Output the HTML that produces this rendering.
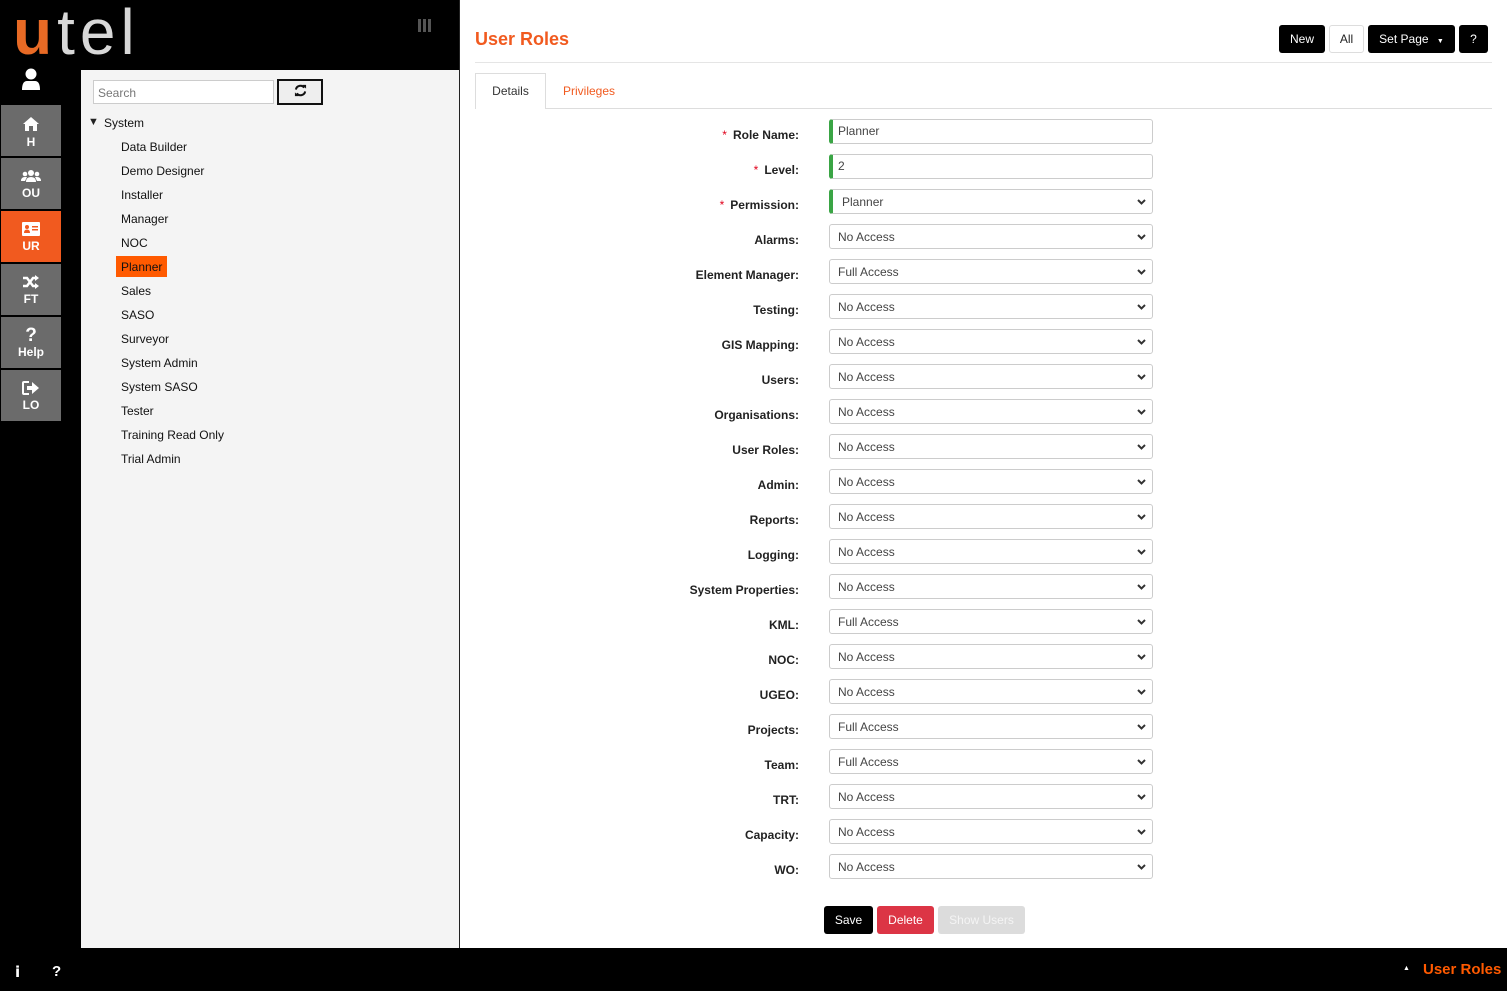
<!DOCTYPE html>
<html><head><meta charset="utf-8"><style>
*{box-sizing:border-box;margin:0;padding:0}
body{width:1507px;height:991px;position:relative;overflow:hidden;background:#fff;font-family:"Liberation Sans",Arial,sans-serif;font-size:12px;color:#222}
.a{position:absolute}
#side{left:0;top:0;width:81px;height:991px;background:#000}
#top{left:0;top:0;width:460px;height:70px;background:#000}
#tree{left:81px;top:70px;width:378px;height:878px;background:#f4f4f4}
#vline{left:459px;top:0;width:1px;height:948px;background:#222}
#foot{left:0;top:948px;width:1507px;height:43px;background:#000}
.nb{position:absolute;left:1px;width:60px;height:51px;background:#6b6b6b;color:#fff;text-align:center;font-size:12px;font-weight:bold}
.nb svg{display:block;margin:11px auto 3px}
.ti{position:absolute;left:121px;font-size:12px;color:#111}
.lbl{position:absolute;right:708px;font-weight:bold;font-size:12px;color:#222;white-space:nowrap}
.lbl i{color:#e0001b;font-style:normal;margin-right:6px;font-weight:normal}
.in{position:absolute;left:829px;width:324px;height:25px;border:1px solid #ccc;border-radius:3px;background:#fff;font-size:12px;color:#444;padding:4px 0 0 8px}
.in.g{border-left:4px solid #3aa545;padding-left:5px}
.in .c{position:absolute;right:6px;top:9px}
.s{padding-top:5px !important}
.btn{position:absolute;height:28px;border-radius:3px;color:#fff;font-size:12px;text-align:center;line-height:28px}
</style></head><body>
<div id="side" class="a"></div>
<div id="top" class="a"></div>
<div id="tree" class="a"></div>
<div id="vline" class="a"></div>

<!-- logo -->
<div class="a" style="left:13px;top:0px;font-size:64px;line-height:64px;font-family:'Liberation Sans',sans-serif;letter-spacing:5px;white-space:nowrap"><span style="color:#e86a25;font-weight:bold">u</span><span style="color:#d8d8d8;font-weight:normal">tel</span></div>
<div class="a" style="left:418px;top:19px;width:3px;height:13px;background:#555;box-shadow:5px 0 #555,10px 0 #555"></div>

<!-- user icon -->
<svg class="a" style="left:21px;top:68px" width="20" height="23" viewBox="0 0 20 23"><circle cx="10" cy="6" r="5.5" fill="#fff"/><path d="M1 22 Q1 13 6 13 L14 13 Q19 13 19 22Z" fill="#fff"/></svg>

<div class="nb" style="top:105px"><svg width="18" height="16" viewBox="0 0 18 16"><path d="M9 1 L1 8 L3 8 L3 15 L7 15 L7 10 L11 10 L11 15 L15 15 L15 8 L17 8Z" fill="#fff"/></svg>H</div>
<div class="nb" style="top:158px"><svg width="20" height="14" viewBox="0 0 20 14"><circle cx="10" cy="4" r="3" fill="#fff"/><circle cx="4" cy="5" r="2.3" fill="#fff"/><circle cx="16" cy="5" r="2.3" fill="#fff"/><path d="M5 13 Q5 8 10 8 Q15 8 15 13Z M0 12 Q0 8 4 8 L6 8 L4 12Z M20 12 Q20 8 16 8 L14 8 L16 12Z" fill="#fff"/></svg>OU</div>
<div class="nb" style="top:211px;background:#f15a1f"><svg width="18" height="14" viewBox="0 0 18 14"><rect x="0" y="0" width="18" height="14" rx="1" fill="#fff"/><circle cx="5" cy="5" r="2" fill="#f15a1f"/><path d="M2 11 Q2 7.5 5 7.5 Q8 7.5 8 11Z" fill="#f15a1f"/><rect x="10" y="4" width="6" height="1.5" fill="#f15a1f"/><rect x="10" y="7" width="6" height="1.5" fill="#f15a1f"/></svg>UR</div>
<div class="nb" style="top:264px"><svg width="18" height="14" viewBox="0 0 18 14"><path d="M1 3 L5 3 L11 11 L14 11" stroke="#fff" stroke-width="2.5" fill="none"/><path d="M1 11 L5 11 L11 3 L14 3" stroke="#fff" stroke-width="2.5" fill="none"/><path d="M13 0 L17 3 L13 6Z M13 8 L17 11 L13 14Z" fill="#fff"/></svg>FT</div>
<div class="nb" style="top:317px;font-weight:bold"><div style="font-size:19px;line-height:19px;padding-top:9px">?</div>Help</div>
<div class="nb" style="top:370px"><svg width="18" height="14" viewBox="0 0 18 14"><path d="M7 1 L2 1 Q1 1 1 2 L1 12 Q1 13 2 13 L7 13" stroke="#fff" stroke-width="2" fill="none"/><path d="M5 5 L10 5 L10 1 L17 7 L10 13 L10 9 L5 9Z" fill="#fff"/></svg>LO</div>

<!-- tree -->
<div class="a" style="left:93px;top:80px;width:181px;height:24px;background:#fff;border:1px solid #ccc;color:#777;padding:5px 0 0 4px">Search</div>
<div class="a" style="left:277px;top:79px;width:46px;height:26px;background:#eee;border:2px solid #111;text-align:center;padding-top:3px"><svg width="13" height="13" viewBox="0 0 14 14"><path d="M2 6 A5 5 0 0 1 11 4 M12 8 A5 5 0 0 1 3 10" stroke="#111" stroke-width="2.2" fill="none"/><path d="M9 1 L13 1 L13 5Z M5 13 L1 13 L1 9Z" fill="#111"/></svg></div>
<div class="a" style="left:88px;top:116px;font-size:11px">▼</div>
<div class="ti" style="left:104px;top:116px">System</div>
<div class="ti" style="top:140px">Data Builder</div>
<div class="ti" style="top:164px">Demo Designer</div>
<div class="ti" style="top:188px">Installer</div>
<div class="ti" style="top:212px">Manager</div>
<div class="ti" style="top:236px">NOC</div>
<div class="a" style="left:116px;top:256px;width:51px;height:21px;background:#ff5a00"></div>
<div class="ti" style="top:260px">Planner</div>
<div class="ti" style="top:284px">Sales</div>
<div class="ti" style="top:308px">SASO</div>
<div class="ti" style="top:332px">Surveyor</div>
<div class="ti" style="top:356px">System Admin</div>
<div class="ti" style="top:380px">System SASO</div>
<div class="ti" style="top:404px">Tester</div>
<div class="ti" style="top:428px">Training Read Only</div>
<div class="ti" style="top:452px">Trial Admin</div>

<!-- header -->
<div class="a" style="left:475px;top:29px;font-size:18px;font-weight:bold;color:#f15a1f">User Roles</div>
<div class="btn" style="left:1279px;top:25px;width:46px;background:#000">New</div>
<div class="btn" style="left:1329px;top:25px;width:35px;background:#fff;color:#222;border:1px solid #ddd;line-height:26px">All</div>
<div class="btn" style="left:1368px;top:25px;width:87px;background:#000">Set Page <span style="font-size:7px;margin-left:5px">▼</span></div>
<div class="btn" style="left:1459px;top:25px;width:29px;background:#000">?</div>
<div class="a" style="left:475px;top:62px;width:1017px;height:1px;background:#e5e5e5"></div>
<div class="a" style="left:475px;top:108px;width:1017px;height:1px;background:#ddd"></div>
<div class="a" style="left:475px;top:73px;width:71px;height:36px;background:#fff;border:1px solid #ddd;border-bottom:none;text-align:center;padding-top:10px;color:#333">Details</div>
<div class="a" style="left:563px;top:84px;color:#f15a1f">Privileges</div>

<!-- form -->
<div class="lbl" style="top:128px"><i>*</i>Role Name:</div><div class="in g" style="top:119px">Planner</div>
<div class="lbl" style="top:163px"><i>*</i>Level:</div><div class="in g" style="top:154px">2</div>
<div class="lbl" style="top:198px"><i>*</i>Permission:</div><div class="in g s" style="top:189px;padding-left:9px">Planner<svg class="c" width="9" height="6" viewBox="0 0 9 6"><path d="M1 1 L4.5 4.5 L8 1" stroke="#333" stroke-width="2" fill="none"/></svg></div>
<div class="lbl" style="top:233px">Alarms:</div><div class="in s" style="top:224px">No Access<svg class="c" width="9" height="6" viewBox="0 0 9 6"><path d="M1 1 L4.5 4.5 L8 1" stroke="#333" stroke-width="2" fill="none"/></svg></div>
<div class="lbl" style="top:268px">Element Manager:</div><div class="in s" style="top:259px">Full Access<svg class="c" width="9" height="6" viewBox="0 0 9 6"><path d="M1 1 L4.5 4.5 L8 1" stroke="#333" stroke-width="2" fill="none"/></svg></div>
<div class="lbl" style="top:303px">Testing:</div><div class="in s" style="top:294px">No Access<svg class="c" width="9" height="6" viewBox="0 0 9 6"><path d="M1 1 L4.5 4.5 L8 1" stroke="#333" stroke-width="2" fill="none"/></svg></div>
<div class="lbl" style="top:338px">GIS Mapping:</div><div class="in s" style="top:329px">No Access<svg class="c" width="9" height="6" viewBox="0 0 9 6"><path d="M1 1 L4.5 4.5 L8 1" stroke="#333" stroke-width="2" fill="none"/></svg></div>
<div class="lbl" style="top:373px">Users:</div><div class="in s" style="top:364px">No Access<svg class="c" width="9" height="6" viewBox="0 0 9 6"><path d="M1 1 L4.5 4.5 L8 1" stroke="#333" stroke-width="2" fill="none"/></svg></div>
<div class="lbl" style="top:408px">Organisations:</div><div class="in s" style="top:399px">No Access<svg class="c" width="9" height="6" viewBox="0 0 9 6"><path d="M1 1 L4.5 4.5 L8 1" stroke="#333" stroke-width="2" fill="none"/></svg></div>
<div class="lbl" style="top:443px">User Roles:</div><div class="in s" style="top:434px">No Access<svg class="c" width="9" height="6" viewBox="0 0 9 6"><path d="M1 1 L4.5 4.5 L8 1" stroke="#333" stroke-width="2" fill="none"/></svg></div>
<div class="lbl" style="top:478px">Admin:</div><div class="in s" style="top:469px">No Access<svg class="c" width="9" height="6" viewBox="0 0 9 6"><path d="M1 1 L4.5 4.5 L8 1" stroke="#333" stroke-width="2" fill="none"/></svg></div>
<div class="lbl" style="top:513px">Reports:</div><div class="in s" style="top:504px">No Access<svg class="c" width="9" height="6" viewBox="0 0 9 6"><path d="M1 1 L4.5 4.5 L8 1" stroke="#333" stroke-width="2" fill="none"/></svg></div>
<div class="lbl" style="top:548px">Logging:</div><div class="in s" style="top:539px">No Access<svg class="c" width="9" height="6" viewBox="0 0 9 6"><path d="M1 1 L4.5 4.5 L8 1" stroke="#333" stroke-width="2" fill="none"/></svg></div>
<div class="lbl" style="top:583px">System Properties:</div><div class="in s" style="top:574px">No Access<svg class="c" width="9" height="6" viewBox="0 0 9 6"><path d="M1 1 L4.5 4.5 L8 1" stroke="#333" stroke-width="2" fill="none"/></svg></div>
<div class="lbl" style="top:618px">KML:</div><div class="in s" style="top:609px">Full Access<svg class="c" width="9" height="6" viewBox="0 0 9 6"><path d="M1 1 L4.5 4.5 L8 1" stroke="#333" stroke-width="2" fill="none"/></svg></div>
<div class="lbl" style="top:653px">NOC:</div><div class="in s" style="top:644px">No Access<svg class="c" width="9" height="6" viewBox="0 0 9 6"><path d="M1 1 L4.5 4.5 L8 1" stroke="#333" stroke-width="2" fill="none"/></svg></div>
<div class="lbl" style="top:688px">UGEO:</div><div class="in s" style="top:679px">No Access<svg class="c" width="9" height="6" viewBox="0 0 9 6"><path d="M1 1 L4.5 4.5 L8 1" stroke="#333" stroke-width="2" fill="none"/></svg></div>
<div class="lbl" style="top:723px">Projects:</div><div class="in s" style="top:714px">Full Access<svg class="c" width="9" height="6" viewBox="0 0 9 6"><path d="M1 1 L4.5 4.5 L8 1" stroke="#333" stroke-width="2" fill="none"/></svg></div>
<div class="lbl" style="top:758px">Team:</div><div class="in s" style="top:749px">Full Access<svg class="c" width="9" height="6" viewBox="0 0 9 6"><path d="M1 1 L4.5 4.5 L8 1" stroke="#333" stroke-width="2" fill="none"/></svg></div>
<div class="lbl" style="top:793px">TRT:</div><div class="in s" style="top:784px">No Access<svg class="c" width="9" height="6" viewBox="0 0 9 6"><path d="M1 1 L4.5 4.5 L8 1" stroke="#333" stroke-width="2" fill="none"/></svg></div>
<div class="lbl" style="top:828px">Capacity:</div><div class="in s" style="top:819px">No Access<svg class="c" width="9" height="6" viewBox="0 0 9 6"><path d="M1 1 L4.5 4.5 L8 1" stroke="#333" stroke-width="2" fill="none"/></svg></div>
<div class="lbl" style="top:863px">WO:</div><div class="in s" style="top:854px">No Access<svg class="c" width="9" height="6" viewBox="0 0 9 6"><path d="M1 1 L4.5 4.5 L8 1" stroke="#333" stroke-width="2" fill="none"/></svg></div>

<div class="btn" style="left:824px;top:906px;width:49px;background:#000">Save</div>
<div class="btn" style="left:877px;top:906px;width:57px;background:#dc3545">Delete</div>
<div class="btn" style="left:938px;top:906px;width:87px;background:#dcdcdc;color:#f4f4f4">Show Users</div>

<div id="foot" class="a"></div>
<div class="a" style="left:15px;top:963px;color:#fff;font-weight:bold;font-size:15px;font-family:'DejaVu Sans',sans-serif">i</div>
<div class="a" style="left:52px;top:963px;color:#fff;font-weight:bold;font-size:15px">?</div>
<div class="a" style="left:1403px;top:965px;color:#fff;font-size:7px">▲</div>
<div class="a" style="left:1423px;top:961px;color:#ff5a00;font-weight:bold;font-size:15px">User Roles</div>
</body></html>
